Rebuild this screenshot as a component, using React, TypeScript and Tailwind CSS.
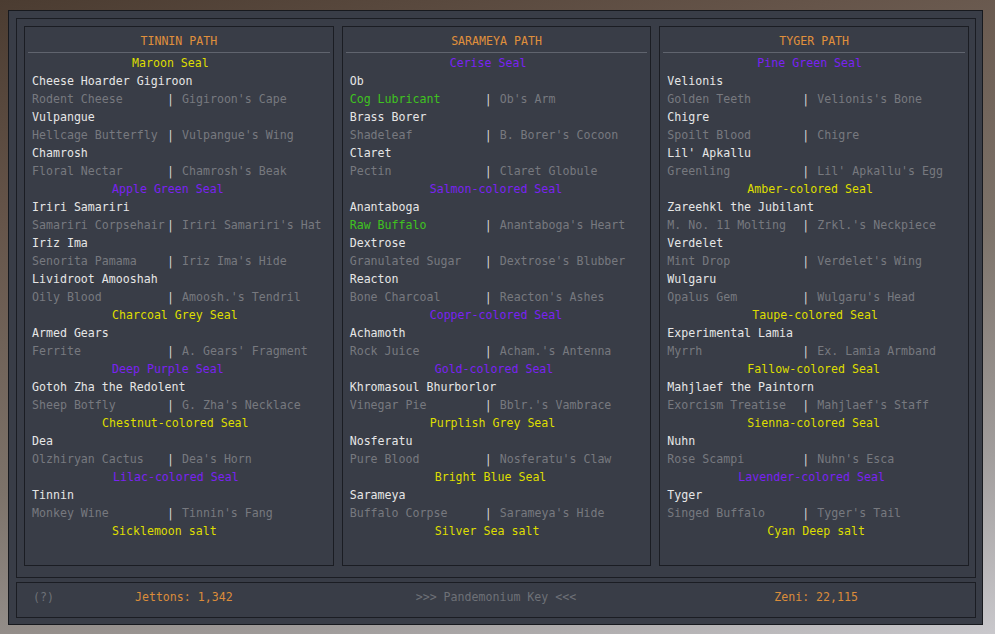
type Row =
  | { kind: 'seal'; text: string; tone: 'yellow' | 'purple'; indent: string }
  | { kind: 'name'; text: string }
  | { kind: 'pair'; left: string; right: string; found?: boolean }

interface Path {
  title: string
  rows: Row[]
}

const seal = (text: string, tone: 'yellow' | 'purple', indent: string): Row => ({ kind: 'seal', text, tone, indent })
const name = (text: string): Row => ({ kind: 'name', text })
const pair = (left: string, right: string, found = false): Row => ({ kind: 'pair', left, right, found })

const PATHS: Path[] = [
  {
    title: 'TINNIN PATH',
    rows: [
      seal('Maroon Seal', 'yellow', 'pl-[100px]'),
      name('Cheese Hoarder Gigiroon'),
      pair('Rodent Cheese', "Gigiroon's Cape"),
      name('Vulpangue'),
      pair('Hellcage Butterfly', "Vulpangue's Wing"),
      name('Chamrosh'),
      pair('Floral Nectar', "Chamrosh's Beak"),
      seal('Apple Green Seal', 'purple', 'pl-[80px]'),
      name('Iriri Samariri'),
      pair('Samariri Corpsehair', "Iriri Samariri's Hat"),
      name('Iriz Ima'),
      pair('Senorita Pamama', "Iriz Ima's Hide"),
      name('Lividroot Amooshah'),
      pair('Oily Blood', "Amoosh.'s Tendril"),
      seal('Charcoal Grey Seal', 'yellow', 'pl-[80px]'),
      name('Armed Gears'),
      pair('Ferrite', "A. Gears' Fragment"),
      seal('Deep Purple Seal', 'purple', 'pl-[80px]'),
      name('Gotoh Zha the Redolent'),
      pair('Sheep Botfly', "G. Zha's Necklace"),
      seal('Chestnut-colored Seal', 'yellow', 'pl-[70px]'),
      name('Dea'),
      pair('Olzhiryan Cactus', "Dea's Horn"),
      seal('Lilac-colored Seal', 'purple', 'pl-[81px]'),
      name('Tinnin'),
      pair('Monkey Wine', "Tinnin's Fang"),
      seal('Sicklemoon salt', 'yellow', 'pl-[80px]'),
    ],
  },
  {
    title: 'SARAMEYA PATH',
    rows: [
      seal('Cerise Seal', 'purple', 'pl-[100px]'),
      name('Ob'),
      pair('Cog Lubricant', "Ob's Arm", true),
      name('Brass Borer'),
      pair('Shadeleaf', "B. Borer's Cocoon"),
      name('Claret'),
      pair('Pectin', 'Claret Globule'),
      seal('Salmon-colored Seal', 'purple', 'pl-[80px]'),
      name('Anantaboga'),
      pair('Raw Buffalo', "Anantaboga's Heart", true),
      name('Dextrose'),
      pair('Granulated Sugar', "Dextrose's Blubber"),
      name('Reacton'),
      pair('Bone Charcoal', "Reacton's Ashes"),
      seal('Copper-colored Seal', 'purple', 'pl-[80px]'),
      name('Achamoth'),
      pair('Rock Juice', "Acham.'s Antenna"),
      seal('Gold-colored Seal', 'purple', 'pl-[85px]'),
      name('Khromasoul Bhurborlor'),
      pair('Vinegar Pie', "Bblr.'s Vambrace"),
      seal('Purplish Grey Seal', 'yellow', 'pl-[80px]'),
      name('Nosferatu'),
      pair('Pure Blood', "Nosferatu's Claw"),
      seal('Bright Blue Seal', 'yellow', 'pl-[85px]'),
      name('Sarameya'),
      pair('Buffalo Corpse', "Sarameya's Hide"),
      seal('Silver Sea salt', 'yellow', 'pl-[85px]'),
    ],
  },
  {
    title: 'TYGER PATH',
    rows: [
      seal('Pine Green Seal', 'purple', 'pl-[90px]'),
      name('Velionis'),
      pair('Golden Teeth', "Velionis's Bone"),
      name('Chigre'),
      pair('Spoilt Blood', 'Chigre'),
      name("Lil' Apkallu"),
      pair('Greenling', "Lil' Apkallu's Egg"),
      seal('Amber-colored Seal', 'yellow', 'pl-[80px]'),
      name('Zareehkl the Jubilant'),
      pair('M. No. 11 Molting', "Zrkl.'s Neckpiece"),
      name('Verdelet'),
      pair('Mint Drop', "Verdelet's Wing"),
      name('Wulgaru'),
      pair('Opalus Gem', "Wulgaru's Head"),
      seal('Taupe-colored Seal', 'yellow', 'pl-[85px]'),
      name('Experimental Lamia'),
      pair('Myrrh', 'Ex. Lamia Armband'),
      seal('Fallow-colored Seal', 'yellow', 'pl-[80px]'),
      name('Mahjlaef the Paintorn'),
      pair('Exorcism Treatise', "Mahjlaef's Staff"),
      seal('Sienna-colored Seal', 'yellow', 'pl-[80px]'),
      name('Nuhn'),
      pair('Rose Scampi', "Nuhn's Esca"),
      seal('Lavender-colored Seal', 'purple', 'pl-[71px]'),
      name('Tyger'),
      pair('Singed Buffalo', "Tyger's Tail"),
      seal('Cyan Deep salt', 'yellow', 'pl-[100px]'),
    ],
  },
]

const TONE = {
  yellow: 'text-[#dede00]',
  purple: 'text-[#7a22f2]',
}

function PathRow({ row }: { row: Row }) {
  if (row.kind === 'seal') {
    return <div className={`h-[18px] whitespace-pre ${row.indent} ${TONE[row.tone]}`}>{row.text}</div>
  }
  if (row.kind === 'name') {
    return <div className="h-[18px] whitespace-pre text-[#e6e6e6]">{row.text}</div>
  }
  return (
    <div className="flex h-[18px] whitespace-pre">
      <span className={`w-[135px] shrink-0 ${row.found ? 'text-[#3fc31f]' : 'text-[#77797f]'}`}>{row.left}</span>
      <span className="w-[7px] shrink-0 text-[#d6d6d6]">|</span>
      <span className="pl-[8px] text-[#77797f]">{row.right}</span>
    </div>
  )
}

function PathColumn({ path }: { path: Path }) {
  return (
    <div className="flex-1 h-[540px] border border-[#1b1d23] pt-[5px]">
      <div className="h-[18px] text-center text-[#e0903c]">{path.title}</div>
      <div className="mx-[3px] mt-[2px] h-px bg-[#60646e]" />
      <div className="px-[7px] pt-[1px]">
        {path.rows.map((row, i) => (
          <PathRow key={i} row={row} />
        ))}
      </div>
    </div>
  )
}

export default function App() {
  return (
    <div className="w-[995px] h-[634px] overflow-hidden bg-[linear-gradient(165deg,#4b3c31_0%,#66554a_25%,#7d736a_55%,#a19d9c_80%,#c9c8cc_100%)] pt-[10px] pl-[8px] font-['DejaVu_Sans_Mono','Liberation_Mono',monospace] text-[11.6px] leading-[18px]">
      <div className="w-[975px] h-[615px] border border-[#17191e] bg-[#393d47] pt-[7px] pl-[7px] pr-[6px] flex flex-col gap-[4px]">
        <div className="h-[560px] border border-[#1b1d23] p-[7px] pr-[6px] flex items-start gap-[8px]">
          {PATHS.map((p) => (
            <PathColumn key={p.title} path={p} />
          ))}
        </div>
        <div className="h-[36px] border border-[#1b1d23] flex items-start pl-[16px] pt-[5px] whitespace-pre">
          <span className="text-[#6e7177]">(?)</span>
          <span className="ml-[81px] text-[#db8c3a]">Jettons: 1,342</span>
          <span className="ml-[183px] text-[#6e7177]">&gt;&gt;&gt; Pandemonium Key &lt;&lt;&lt;</span>
          <span className="ml-[198px] text-[#db8c3a]">Zeni: 22,115</span>
        </div>
      </div>
    </div>
  )
}
